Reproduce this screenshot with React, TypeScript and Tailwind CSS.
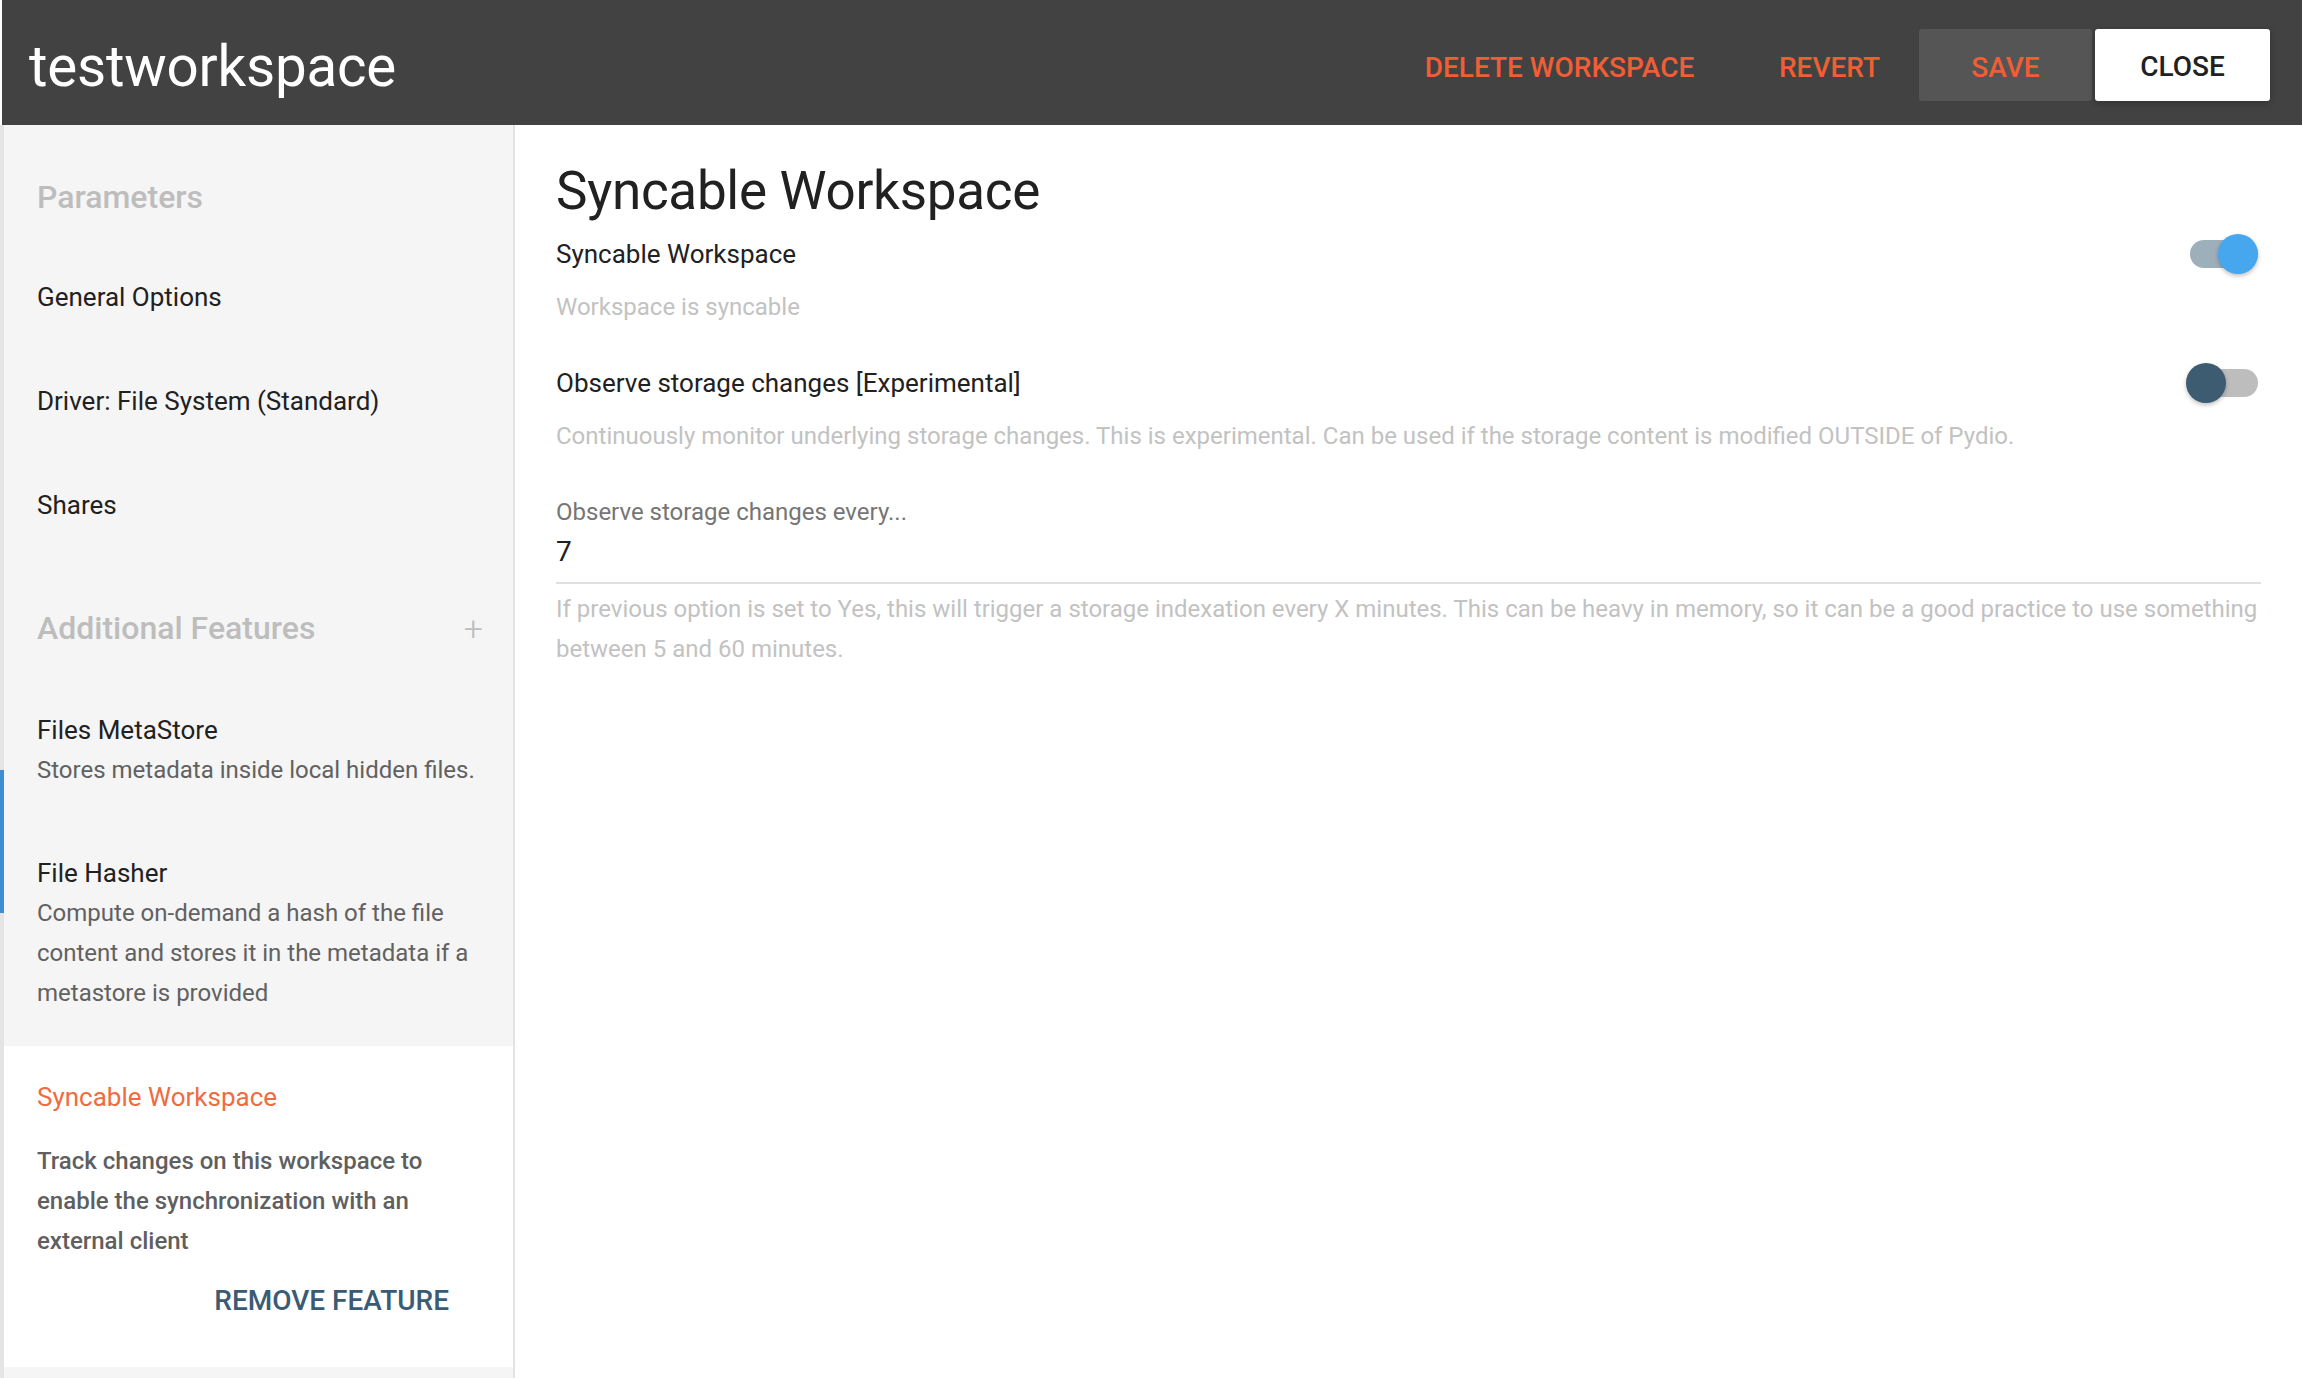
import React from 'react';

const Toggle = ({ on }: { on: boolean }) => (
  <div className="relative w-[72px] h-[40px] shrink-0 mr-[3px]">
    <div className={`absolute left-[4px] right-0 top-[6px] h-[28px] rounded-full ${on ? 'bg-[#9eafbc]' : 'bg-[#bdbdbd]'}`} />
    <div
      className={`absolute top-0 w-[40px] h-[40px] rounded-full shadow-[0_2px_4px_rgba(0,0,0,0.25)] ${
        on ? 'right-0 bg-[#46a7ef]' : 'left-0 bg-[#3d5b71]'
      }`}
    />
  </div>
);

const App = () => {
  return (
    <div className="w-full h-[1378px] overflow-hidden bg-white flex flex-col font-['Roboto','Liberation_Sans',sans-serif]">
      {/* Header */}
      <div className="h-[125px] shrink-0 ml-[2px] bg-[#424242] flex items-center justify-between pl-[27px] pr-[32px] pt-[4px]">
        <div className="mt-[6px] text-[56.5px] text-white leading-none tracking-[-0.2px]">testworkspace</div>
        <div className="flex items-center text-[28px] font-medium">
          <button className="w-[325px] h-[72px] pt-[6px] uppercase text-[#ef5e34]">Delete Workspace</button>
          <button className="w-[157px] h-[72px] pt-[6px] ml-[29px] uppercase text-[#ef5e34]">Revert</button>
          <button className="w-[173px] h-[72px] pt-[6px] ml-[11px] uppercase bg-[#555555] rounded-[3px] text-[#ef5e34]">Save</button>
          <button className="w-[175px] h-[72px] pt-[4px] ml-[3px] uppercase bg-white rounded-[3px] text-[#212121] shadow-[0_2px_6px_rgba(0,0,0,0.25)]">Close</button>
        </div>
      </div>

      <div className="flex flex-1 min-h-0">
        {/* page behind the dialog */}
        <div className="w-[4px] shrink-0 flex flex-col bg-[#e4e4e4]">
          <div className="h-[645px]" />
          <div className="h-[143px] bg-[#3c8dd3]" />
        </div>

        {/* Sidebar */}
        <div className="w-[511px] shrink-0 bg-[#f5f5f5] border-r-2 border-[#e3e3e3] flex flex-col">
          <div className="pl-[33px]">
            <div className="mt-[42px] h-[60px] flex items-center text-[32px] font-medium text-[#bdbdbd]">Parameters</div>
            <div className="mt-[18px] text-[26px] text-[#212121]">
              <div className="h-[104px] flex items-center">General Options</div>
              <div className="h-[104px] flex items-center">Driver: File System (Standard)</div>
              <div className="h-[104px] flex items-center">Shares</div>
            </div>
            <div className="mt-[41px] h-[60px] flex items-center justify-between pr-[30px] text-[#bdbdbd]">
              <span className="text-[32px] font-medium">Additional Features</span>
              <span className="text-[34px] font-light leading-none">+</span>
            </div>
            <div className="mt-[52px] pr-[20px]">
              <div className="h-[40px] leading-[40px] text-[26px] text-[#212121]">Files MetaStore</div>
              <div className="text-[24px] leading-[40px] text-[#616161]">Stores metadata inside local hidden files.</div>
            </div>
            <div className="mt-[63px] pr-[20px]">
              <div className="h-[40px] leading-[40px] text-[26px] text-[#212121]">File Hasher</div>
              <div className="text-[24px] leading-[40px] text-[#616161]">
                Compute on-demand a hash of the file content and stores it in the metadata if a metastore is provided
              </div>
            </div>
          </div>

          {/* Selected feature card */}
          <div className="mt-[33px] bg-white pl-[33px] pr-[40px] pt-[31px] pb-[46px]">
            <div className="h-[40px] leading-[40px] text-[26px] text-[#ef6b40]">Syncable Workspace</div>
            <div className="mt-[24px] text-[24px] leading-[40px] font-medium text-[#5f5f5f] pr-[10px]">
              Track changes on this workspace to enable the synchronization with an external client
            </div>
            <div className="mt-[20px] h-[40px] flex items-center justify-end pr-[24px]">
              <button className="text-[28px] font-medium uppercase text-[#3a5b73]">Remove Feature</button>
            </div>
          </div>
        </div>

        {/* Main panel */}
        <div className="flex-1 min-w-0 pl-[41px] pr-[41px]">
          <div className="mt-[36px] h-[60px] leading-[60px] text-[53px] text-[#212121] tracking-[-0.3px]">Syncable Workspace</div>

          <div className="mt-[13px] h-[40px] flex items-center justify-between">
            <span className="text-[26px] text-[#212121]">Syncable Workspace</span>
            <Toggle on={true} />
          </div>
          <div className="mt-[13px] h-[40px] leading-[40px] text-[24px] text-[#c2c2c2]">Workspace is syncable</div>

          <div className="mt-[36px] h-[40px] flex items-center justify-between">
            <span className="text-[26px] text-[#212121]">Observe storage changes [Experimental]</span>
            <Toggle on={false} />
          </div>
          <div className="mt-[13px] h-[40px] leading-[40px] text-[24px] text-[#c2c2c2]">
            Continuously monitor underlying storage changes. This is experimental. Can be used if the storage content is modified OUTSIDE of Pydio.
          </div>

          <div className="mt-[38px] h-[36px] leading-[36px] text-[24px] text-[#757575]">Observe storage changes every...</div>
          <div className="mt-[2px] h-[52px] border-b-2 border-[#e0e0e0]">
            <div className="h-[40px] leading-[40px] text-[28px] text-[#212121]">7</div>
          </div>
          <div className="mt-[5px] text-[24px] leading-[40px] text-[#c2c2c2]">
            If previous option is set to Yes, this will trigger a storage indexation every X minutes. This can be heavy in memory, so it can be a good practice to use something between 5 and 60 minutes.
          </div>
        </div>
      </div>
    </div>
  );
};

export default App;
